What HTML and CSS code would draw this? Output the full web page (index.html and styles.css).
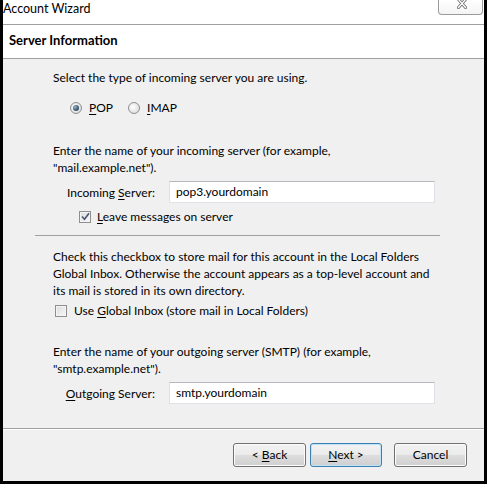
FILE: index.html
```html
<!DOCTYPE html>
<html>
<head>
<meta charset="utf-8">
<link rel="stylesheet" href="styles.css">
</head>
<body>
<div class="window">
  <div class="titlebar">
    <span class="title">Account Wizard</span>
    <span class="close">
      <svg width="10" height="10" viewBox="0 0 10 10">
        <path d="M1.5 0.5 L8.5 8.5 M8.5 0.5 L1.5 8.5" stroke="#6b6b6b" stroke-width="3" stroke-linecap="square"/>
        <path d="M1.5 0.5 L8.5 8.5 M8.5 0.5 L1.5 8.5" stroke="#ffffff" stroke-width="1.3" stroke-linecap="square"/>
      </svg>
    </span>
  </div>
  <div class="header"><span class="header-title">Server Information</span></div>
  <div class="content">
    <div class="group">
      <p class="txt t1">Select the type of incoming server you are using.</p>
      <div class="radios">
        <span class="opt"><span class="radio on"></span><span><u>P</u>OP</span></span>
        <span class="opt"><span class="radio"></span><span><u>I</u>MAP</span></span>
      </div>
      <p class="txt t2">Enter the name of your incoming server (for example,<br>"mail.example.net").</p>
      <div class="field f1">
        <span class="lbl">Incoming <u>S</u>erver:</span>
        <span class="input">pop3.yourdomain</span>
      </div>
      <div class="chk-row leave">
        <span class="checkbox">
          <svg width="9" height="9" viewBox="0 0 9 9"><path d="M1 4.5 L3.5 7.2 L8 1.2" fill="none" stroke="#4a5670" stroke-width="1.6"/></svg>
        </span>
        <span><u>L</u>eave messages on server</span>
      </div>
    </div>
    <div class="sep"></div>
    <div class="group">
      <p class="txt t3">Check this checkbox to store mail for this account in the Local Folders<br>Global Inbox. Otherwise the account appears as a top-level account and<br>its mail is stored in its own directory.</p>
      <div class="chk-row global">
        <span class="checkbox"></span>
        <span>Use <u>G</u>lobal Inbox (store mail in Local Folders)</span>
      </div>
      <p class="txt t4">Enter the name of your outgoing server (SMTP) (for example,<br>"smtp.example.net").</p>
      <div class="field f2">
        <span class="lbl"><u>O</u>utgoing Server:</span>
        <span class="input">smtp.yourdomain</span>
      </div>
    </div>
  </div>
  <div class="footer">
    <span class="btn back">&lt; <u>B</u>ack</span>
    <span class="btn next default"><u>N</u>ext &gt;</span>
    <span class="btn cancel">Cancel</span>
  </div>
</div>
</body>
</html>
```

FILE: styles.css
```css
html, body {
  margin: 0;
  padding: 0;
  background: #000;
}
body {
  font-family: Lato, "Noto Sans", sans-serif;
  font-size: 12px;
  color: #000;
}
u { text-decoration: underline; text-underline-offset: 2px; }

.window {
  width: 487px;
  height: 484px;
  box-sizing: border-box;
  border: 3px solid #000;
  border-top: 0;
  background: #f0f0f0;
  display: flex;
  flex-direction: column;
}

.titlebar {
  height: 25px;
  box-sizing: border-box;
  background: #fff;
  border-bottom: 1px solid #a0a0a0;
  display: flex;
  justify-content: space-between;
  align-items: flex-start;
}
.title {
  font-size: 12.5px;
  line-height: 18px;
}
.close {
  width: 45px;
  height: 15px;
  box-sizing: border-box;
  margin-right: 1px;
  border: 1px solid #9c9c9c;
  border-top: 0;
  border-radius: 0 0 4px 4px;
  background: linear-gradient(#ffffff, #f4f4f4);
  display: flex;
  justify-content: center;
  align-items: flex-start;
}
.close svg { margin-top: -1px; margin-left: 2px; }

.header {
  height: 34px;
  box-sizing: border-box;
  background: #fff;
  border-bottom: 1px solid #a0a0a0;
  padding: 7px 0 0 6px;
}
.header-title {
  font-weight: bold;
  font-size: 13px;
  line-height: 17px;
}

.content {
  flex: 1;
  padding: 10px 44px 0 32px;
}
.group { padding-left: 18px; }

.txt {
  margin: 0;
  line-height: 17px;
}
.t2 { margin-top: 26px; }
.t3 { margin-top: 12px; }
.t4 { margin-top: 24px; }

.radios {
  display: flex;
  align-items: center;
  height: 17px;
  margin-top: 13px;
  padding-left: 17px;
  gap: 15px;
}
.opt {
  display: flex;
  align-items: center;
  gap: 7px;
}
.radio {
  width: 12px;
  height: 12px;
  box-sizing: border-box;
  border-radius: 50%;
  border: 1px solid #8f8f8f;
  background: radial-gradient(circle at 40% 40%, #ffffff 0%, #e6e6e6 60%, #d4d4d4 100%);
  position: relative;
}
.radio.on::after {
  content: "";
  position: absolute;
  left: 2px;
  top: 2px;
  width: 6px;
  height: 6px;
  border-radius: 50%;
  background: radial-gradient(circle at 35% 35%, #9fb4c4 0%, #3e5f78 55%, #22384a 100%);
}

.field {
  display: flex;
  align-items: center;
}
.f1 { margin-top: 5px; }
.f2 { margin-top: 5px; }
.lbl {
  width: 102px;
  text-align: right;
  margin-right: 14px;
}
.input {
  width: 266px;
  height: 22px;
  box-sizing: border-box;
  background: #fff;
  border: 1px solid #dfe3e8;
  border-top-color: #b5b8bd;
  padding-left: 6px;
  line-height: 20px;
}

.chk-row {
  display: flex;
  align-items: center;
  height: 17px;
}
.leave { margin-top: 5px; padding-left: 26px; gap: 6px; }
.global { margin-top: 3px; padding-left: 2px; gap: 7px; }
.checkbox {
  width: 12px;
  height: 12px;
  box-sizing: border-box;
  border: 1px solid #8f8f8f;
  background: linear-gradient(135deg, #dcdcdc, #f8f8f8);
  box-shadow: inset 0 0 0 1px #f4f4f4;
  display: flex;
  align-items: center;
  justify-content: center;
}

.sep {
  margin-top: 10px;
  height: 0;
  border-top: 1px solid #a0a0a0;
}

.footer {
  height: 53px;
  box-sizing: border-box;
  border-top: 1px solid #a0a0a0;
  box-shadow: inset 0 1px 0 #ffffff;
  display: flex;
  justify-content: flex-end;
  align-items: flex-start;
  padding: 14px 17px 0 0;
}
.btn {
  height: 24px;
  box-sizing: border-box;
  border: 1px solid #707070;
  border-radius: 3px;
  background: linear-gradient(#f2f2f2 0%, #ebebeb 48%, #dddddd 52%, #cfcfcf 100%);
  box-shadow: inset 0 0 0 1px #fcfcfc;
  text-align: center;
  line-height: 22px;
}
.back { width: 73px; }
.next { width: 72px; margin-left: 4px; }
.cancel { width: 73px; margin-left: 12px; }
.default {
  border-color: #3c7fb1;
  box-shadow: inset 0 0 0 1px #bfe4f7;
}
```
